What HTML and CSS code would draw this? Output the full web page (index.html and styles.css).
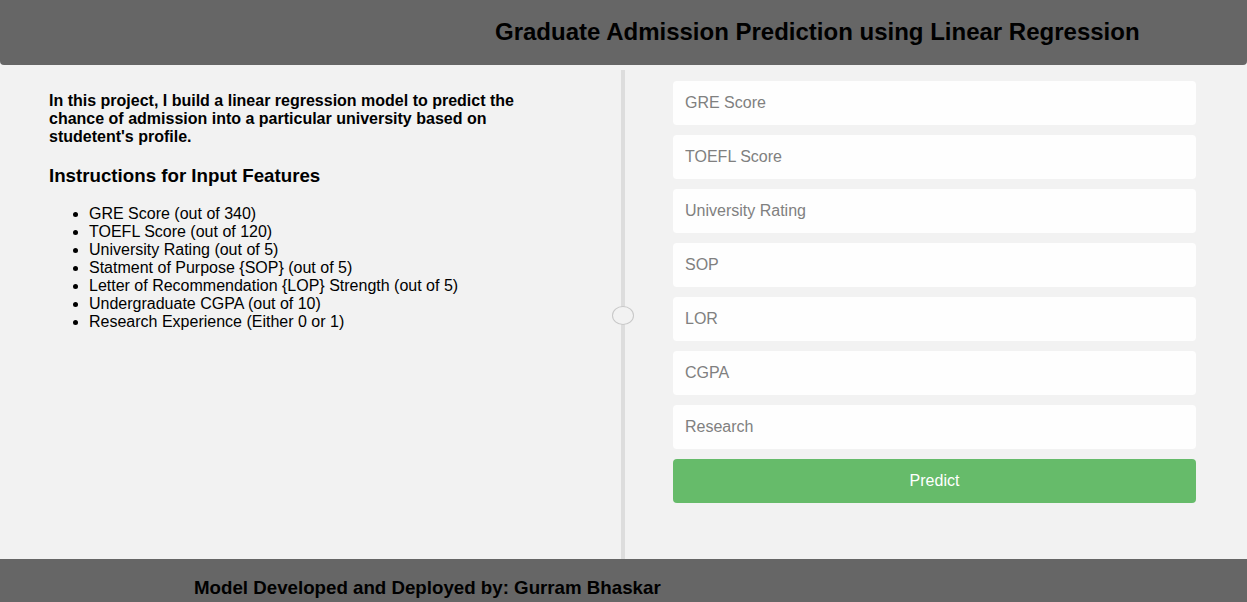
FILE: index.html
```html
<!DOCTYPE html>
<html lang="en">
<head>
<meta charset="utf-8">
<title>Graduate Admission Prediction</title>
<link rel="stylesheet" href="styles.css">
</head>
<body>
<header class="topbar">
  <h1 class="title">Graduate Admission Prediction using Linear Regression</h1>
</header>
<main class="main">
  <section class="info">
    <p class="intro">In this project, I build a linear regression model to predict the chance of admission into a particular university based on studetent's profile.</p>
    <h3 class="subhead">Instructions for Input Features</h3>
    <ul class="features">
      <li>GRE Score (out of 340)</li>
      <li>TOEFL Score (out of 120)</li>
      <li>University Rating (out of 5)</li>
      <li>Statment of Purpose {SOP} (out of 5)</li>
      <li>Letter of Recommendation {LOP} Strength (out of 5)</li>
      <li>Undergraduate CGPA (out of 10)</li>
      <li>Research Experience (Either 0 or 1)</li>
    </ul>
  </section>
  <div class="divider"><span class="knob"></span></div>
  <section class="formcol">
    <form class="form">
      <input class="field" type="text" placeholder="GRE Score">
      <input class="field" type="text" placeholder="TOEFL Score">
      <input class="field" type="text" placeholder="University Rating">
      <input class="field" type="text" placeholder="SOP">
      <input class="field" type="text" placeholder="LOR">
      <input class="field" type="text" placeholder="CGPA">
      <input class="field" type="text" placeholder="Research">
      <button class="predict" type="button">Predict</button>
    </form>
  </section>
</main>
<footer class="footer">
  <p class="credit">Model Developed and Deployed by: Gurram Bhaskar</p>
</footer>
</body>
</html>
```
FILE: styles.css
```css
* { box-sizing: border-box; }
html, body {
  margin: 0;
  padding: 0;
  height: 602px;
  overflow: hidden;
}
body {
  background: #f2f2f2;
  font-family: "Liberation Sans", Arial, sans-serif;
  color: #000;
}
.topbar {
  height: 65px;
  background: #666666;
  border-radius: 0 0 4px 4px;
  display: flex;
  align-items: center;
  padding: 0 0 2px 495px;
}
.title {
  margin: 0;
  font-size: 24px;
  font-weight: bold;
  color: #000;
  white-space: nowrap;
}
.main {
  display: flex;
  height: 494px;
}
.info {
  width: 621px;
  padding: 11px 0 0 49px;
}
.intro {
  width: 480px;
  margin: 16px 0;
  font-size: 16px;
  font-weight: bold;
}
.subhead {
  font-size: 18.72px;
  font-weight: bold;
  margin: 18.72px 0;
}
.features {
  margin: 16px 0;
  padding-left: 40px;
  font-size: 16px;
}
.divider {
  position: relative;
  width: 4px;
  margin-top: 5px;
  background: #dddddd;
}
.knob {
  position: absolute;
  left: -9px;
  top: 236px;
  width: 22px;
  height: 19px;
  border: 1px solid #c8c8c8;
  border-radius: 50%;
  background: #f2f2f2;
}
.formcol {
  flex: 1;
  padding: 16px 51px 0 48px;
}
.form {
  display: flex;
  flex-direction: column;
  gap: 10px;
}
.field {
  height: 44px;
  border: none;
  border-radius: 4px;
  background: #fefefe;
  padding: 0 12px;
  font-family: "Liberation Sans", Arial, sans-serif;
  font-size: 16px;
  color: #333;
  outline: none;
}
.field::placeholder {
  color: #808080;
}
.predict {
  height: 44px;
  border: none;
  border-radius: 4px;
  background: #66bb6a;
  color: #ffffff;
  font-family: "Liberation Sans", Arial, sans-serif;
  font-size: 16px;
  cursor: pointer;
}
.footer {
  height: 43px;
  background: #666666;
  padding: 18px 0 0 194px;
}
.credit {
  margin: 0;
  font-size: 18.72px;
  line-height: 22px;
  font-weight: bold;
  color: #000;
}
```
